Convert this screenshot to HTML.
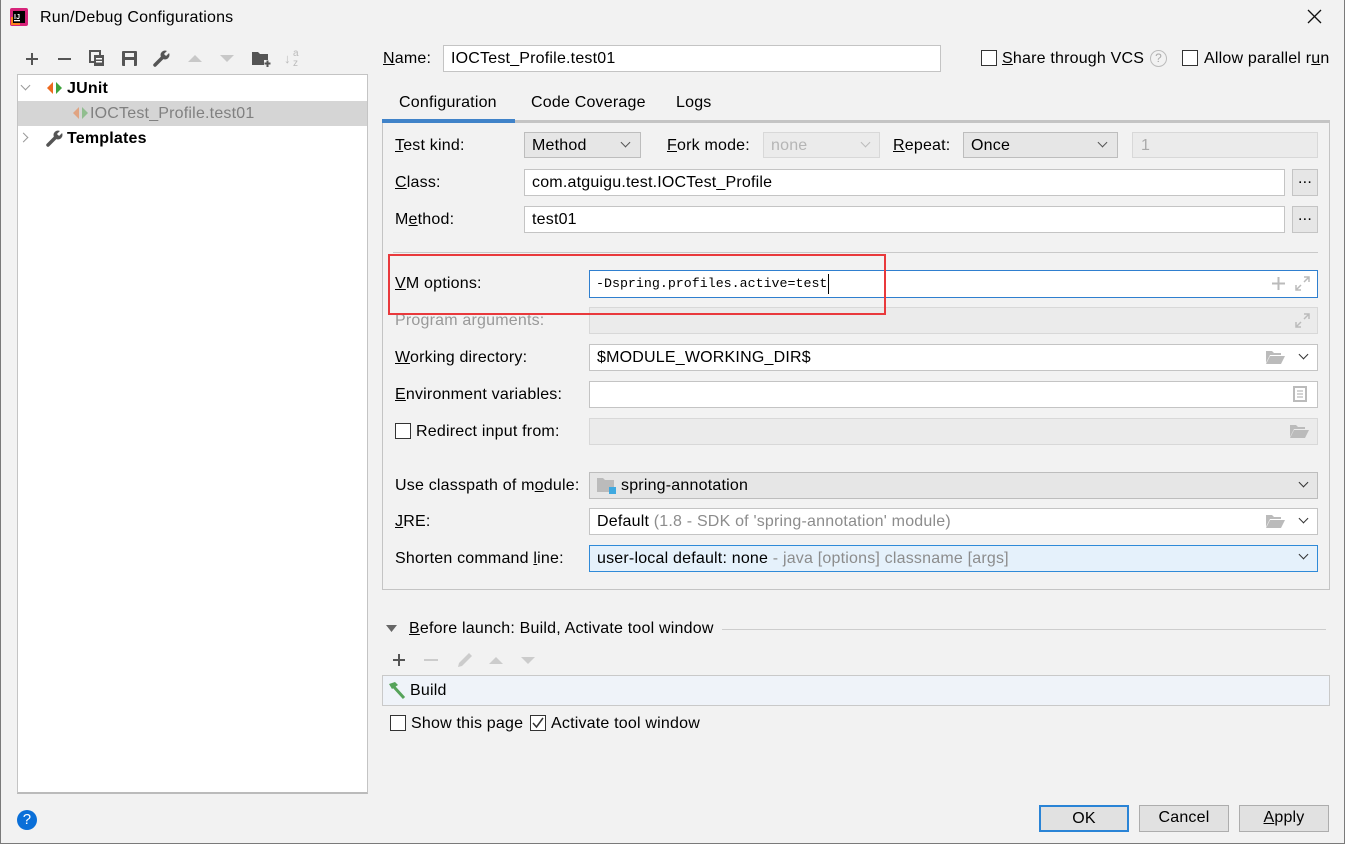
<!DOCTYPE html><html><head><meta charset="utf-8"><style>
*{box-sizing:border-box;margin:0;padding:0}
body{width:1345px;height:844px;background:#f2f2f2;font-family:"Liberation Sans",sans-serif;font-size:16px;letter-spacing:.2px;color:#000;position:relative;overflow:hidden}
.a{position:absolute;white-space:nowrap}
.t{position:absolute;white-space:nowrap;line-height:18px}
.in{position:absolute;background:#fff;border:1px solid #c4c4c4}
.dis{position:absolute;background:#ebebeb;border:1px solid #d8d8d8}
.cb{position:absolute;background:#e6e6e6;border:1px solid #bdbdbd}
.chk{position:absolute;width:16px;height:16px;border:1px solid #333;background:#fff}
.btn{position:absolute;background:#e1e1e1;border:1px solid #adadad;text-align:center;line-height:24px}
.g{color:#8c8c8c}
.dd{position:absolute;width:7px;height:7px;border-right:1.3px solid #555;border-bottom:1.3px solid #555;transform:rotate(45deg)}
u{text-decoration:underline}
</style></head><body>
<div class="a" style="left:0;top:0;width:1px;height:844px;background:#7a7a7a"></div>
<div class="a" style="right:0;top:0;width:1px;height:844px;background:#7a7a7a"></div>
<div class="a" style="left:0;bottom:0;width:1345px;height:1px;background:#7a7a7a"></div>
<svg class="a" style="left:10px;top:8px" width="18" height="18"><rect x="0" y="0" width="18" height="18" rx="2" fill="#d6247a"/><rect x="1" y="9" width="9" height="8" fill="#fc801d"/><rect x="3" y="3" width="12" height="12" fill="#000"/><text x="4" y="11" font-size="7" fill="#fff" font-family="Liberation Sans" font-weight="bold">IJ</text><rect x="4" y="12" width="6" height="1.3" fill="#fff"/></svg>
<div class="t" style="left:40px;top:9px">Run/Debug Configurations</div>
<svg class="a" style="left:1307px;top:9px" width="15" height="15"><path d="M1 1 L14 14 M14 1 L1 14" stroke="#111" stroke-width="1.3"/></svg>

<!-- toolbar -->
<svg class="a" style="left:25px;top:52px" width="14" height="14"><path d="M7 1V13M1 7H13" stroke="#555" stroke-width="2"/></svg>
<div class="a" style="left:58px;top:58px;width:13px;height:2px;background:#555"></div>
<svg class="a" style="left:89px;top:50px" width="16" height="16"><rect x="1" y="1" width="10" height="11" fill="none" stroke="#555" stroke-width="2"/><rect x="5" y="5" width="10" height="11" fill="#555"/><rect x="7" y="8" width="6" height="1.5" fill="#fff"/><rect x="7" y="11" width="6" height="1.5" fill="#fff"/></svg>
<svg class="a" style="left:122px;top:51px" width="16" height="16"><rect x="0" y="0" width="15" height="15" rx="1" fill="#555"/><rect x="3" y="2" width="9" height="4" fill="#f2f2f2"/><rect x="3" y="9" width="9" height="6" fill="#f2f2f2"/></svg>
<svg class="a" style="left:153px;top:50px" width="17" height="17"><path d="M2 15 L9 8" stroke="#555" stroke-width="3.5" stroke-linecap="round"/><circle cx="12" cy="5" r="4.5" fill="#555"/><path d="M12 5 L16 1" stroke="#f2f2f2" stroke-width="3"/></svg>
<svg class="a" style="left:187px;top:53px" width="16" height="10"><path d="M1 9 L8 2 L15 9Z" fill="#c8c8c8"/></svg>
<svg class="a" style="left:219px;top:54px" width="16" height="10"><path d="M1 1 L8 8 L15 1Z" fill="#c8c8c8"/></svg>
<svg class="a" style="left:252px;top:50px" width="19" height="18"><path d="M0 2 H6 L8 4 H16 V15 H0Z" fill="#555"/><rect x="12" y="10" width="7" height="7" fill="#f2f2f2"/><path d="M15.5 10.5 V17 M12.5 13.5 H18.5" stroke="#555" stroke-width="2"/></svg>
<div class="t" style="left:284px;top:50px;font-size:13px;color:#bbb">↓</div>
<div class="t" style="left:293px;top:45px;font-size:10px;color:#bbb">a</div>
<div class="t" style="left:293px;top:55px;font-size:10px;color:#bbb">z</div>

<!-- tree -->
<div class="a" style="left:17px;top:74px;width:351px;height:720px;background:#fff;border:1px solid #c4c4c4;border-bottom:2px solid #bbb"></div>
<div class="a" style="left:18px;top:101px;width:349px;height:25px;background:#d5d5d5"></div>
<div class="dd" style="left:22px;top:82px;border-color:#999"></div>
<svg class="a" style="left:47px;top:82px" width="16" height="12"><path d="M6 0 L0 6 L6 12Z" fill="#ee6a1f"/><path d="M9 0 L15 6 L9 12Z" fill="#3fa33c"/></svg>
<div class="t" style="left:67px;top:80px;font-weight:bold">JUnit</div>
<svg class="a" style="left:73px;top:107px" width="16" height="12" opacity=".45"><path d="M6 0 L0 6 L6 12Z" fill="#ee6a1f"/><path d="M9 0 L15 6 L9 12Z" fill="#3fa33c"/></svg>
<div class="t" style="left:90px;top:105px;color:#808080">IOCTest_Profile.test01</div>
<div class="a" style="left:20px;top:134px;width:7px;height:7px;border-right:1.3px solid #999;border-top:1.3px solid #999;transform:rotate(45deg)"></div>
<svg class="a" style="left:46px;top:130px" width="17" height="17"><path d="M2 15 L9 8" stroke="#555" stroke-width="3.5" stroke-linecap="round"/><circle cx="12" cy="5" r="4.5" fill="#555"/><path d="M12 5 L16 1" stroke="#fff" stroke-width="3"/></svg>
<div class="t" style="left:67px;top:130px;font-weight:bold">Templates</div>

<!-- name -->
<div class="t" style="left:383px;top:50px"><u>N</u>ame:</div>
<div class="in" style="left:443px;top:45px;width:498px;height:27px"></div>
<div class="t" style="left:451px;top:50px">IOCTest_Profile.test01</div>
<div class="chk" style="left:981px;top:50px"></div>
<div class="t" style="left:1002px;top:50px"><u>S</u>hare through VCS</div>
<div class="a" style="left:1150px;top:50px;width:17px;height:17px;border:1px solid #bbb;border-radius:50%;color:#aaa;font-size:12px;text-align:center;line-height:15px">?</div>
<div class="chk" style="left:1182px;top:50px"></div>
<div class="t" style="left:1204px;top:50px">Allow parallel r<u>u</u>n</div>

<!-- tabs -->
<div class="t" style="left:399px;top:94px">Configuration</div>
<div class="t" style="left:531px;top:94px">Code Coverage</div>
<div class="t" style="left:676px;top:94px">Logs</div>
<div class="a" style="left:382px;top:122px;width:948px;height:468px;border:1px solid #c4c4c4;border-top:none"></div>
<div class="a" style="left:382px;top:120px;width:948px;height:3px;background:#c4c4c4"></div>
<div class="a" style="left:382px;top:119px;width:133px;height:4px;background:#4083c9"></div>

<!-- rows -->
<div class="t" style="left:395px;top:137px"><u>T</u>est kind:</div>
<div class="cb" style="left:524px;top:132px;width:117px;height:26px"></div>
<div class="t" style="left:532px;top:137px">Method</div>
<div class="dd" style="left:622px;top:139px"></div>
<div class="t" style="left:667px;top:137px"><u>F</u>ork mode:</div>
<div class="dis" style="left:763px;top:132px;width:117px;height:26px"></div>
<div class="t g" style="left:771px;top:137px;color:#b5b5b5">none</div>
<div class="dd" style="left:862px;top:139px;border-color:#bbb"></div>
<div class="t" style="left:893px;top:137px"><u>R</u>epeat:</div>
<div class="cb" style="left:963px;top:132px;width:155px;height:26px"></div>
<div class="t" style="left:971px;top:137px">Once</div>
<div class="dd" style="left:1099px;top:139px"></div>
<div class="dis" style="left:1132px;top:132px;width:186px;height:26px"></div>
<div class="t" style="left:1141px;top:137px;color:#aaa">1</div>

<div class="t" style="left:395px;top:174px"><u>C</u>lass:</div>
<div class="in" style="left:524px;top:169px;width:761px;height:27px"></div>
<div class="t" style="left:532px;top:174px">com.atguigu.test.IOCTest_Profile</div>
<div class="btn" style="left:1292px;top:169px;width:26px;height:27px;line-height:18px;background:#e6e6e6;border-color:#c4c4c4">...</div>
<div class="t" style="left:395px;top:211px">M<u>e</u>thod:</div>
<div class="in" style="left:524px;top:206px;width:761px;height:27px"></div>
<div class="t" style="left:532px;top:211px">test01</div>
<div class="btn" style="left:1292px;top:206px;width:26px;height:27px;line-height:18px;background:#e6e6e6;border-color:#c4c4c4">...</div>
<div class="a" style="left:393px;top:252px;width:925px;height:1px;background:#c9c9c9"></div>

<div class="t" style="left:395px;top:275px"><u>V</u>M options:</div>
<div class="in" style="left:589px;top:270px;width:729px;height:28px;border-color:#2f7fcf"></div>
<div class="t" style="left:596px;top:275px;font-family:'Liberation Mono',monospace;font-size:13.3px;letter-spacing:0">-Dspring.profiles.active=test</div>
<div class="a" style="left:828px;top:274px;width:1px;height:20px;background:#000"></div>
<svg class="a" style="left:1272px;top:277px" width="13" height="13"><path d="M6.5 0V13M0 6.5H13" stroke="#bbb" stroke-width="2"/></svg>
<svg class="a" style="left:1295px;top:276px" width="15" height="15"><path d="M9 1H14V6M14 1L9 6M6 14H1V9M1 14L6 9" stroke="#bbb" stroke-width="1.5" fill="none"/></svg>

<div class="t" style="left:395px;top:312px;color:#999">Program arguments:</div>
<div class="dis" style="left:589px;top:307px;width:729px;height:27px"></div>
<svg class="a" style="left:1295px;top:313px" width="15" height="15"><path d="M9 1H14V6M14 1L9 6M6 14H1V9M1 14L6 9" stroke="#bbb" stroke-width="1.5" fill="none"/></svg>
<div class="t" style="left:395px;top:349px"><u>W</u>orking directory:</div>
<div class="in" style="left:589px;top:344px;width:729px;height:27px"></div>
<div class="t" style="left:597px;top:349px">$MODULE_WORKING_DIR$</div>
<svg class="a" style="left:1266px;top:350px" width="19" height="14"><path d="M0 1 H6 L8 3 H15 V5 H4 L0 13Z" fill="#bbb"/><path d="M4 6 H19 L15 14 H0Z" fill="#bbb"/></svg>
<div class="dd" style="left:1300px;top:351px;border-color:#333"></div>
<div class="t" style="left:395px;top:386px"><u>E</u>nvironment variables:</div>
<div class="in" style="left:589px;top:381px;width:729px;height:27px"></div>
<svg class="a" style="left:1293px;top:386px" width="14" height="16"><rect x="1" y="1" width="12" height="14" fill="none" stroke="#bbb" stroke-width="2"/><path d="M4 5H10M4 8H10M4 11H10" stroke="#bbb" stroke-width="1.3"/></svg>
<div class="chk" style="left:395px;top:423px"></div>
<div class="t" style="left:416px;top:423px">Redirect input from:</div>
<div class="dis" style="left:589px;top:418px;width:729px;height:27px"></div>
<svg class="a" style="left:1290px;top:424px" width="19" height="14"><path d="M0 1 H6 L8 3 H15 V5 H4 L0 13Z" fill="#bbb"/><path d="M4 6 H19 L15 14 H0Z" fill="#bbb"/></svg>

<div class="t" style="left:395px;top:477px">Use classpath of m<u>o</u>dule:</div>
<div class="cb" style="left:589px;top:472px;width:729px;height:27px"></div>
<svg class="a" style="left:597px;top:477px" width="20" height="18"><path d="M0 1 H6 L8 3 H17 V15 H0Z" fill="#bbb"/><rect x="12" y="10" width="7" height="7" fill="#3fa9e0"/></svg>
<div class="t" style="left:621px;top:477px">spring-annotation</div>
<div class="dd" style="left:1300px;top:479px;border-color:#333"></div>
<div class="t" style="left:395px;top:513px"><u>J</u>RE:</div>
<div class="in" style="left:589px;top:508px;width:729px;height:27px"></div>
<div class="t" style="left:597px;top:513px">Default <span class="g">(1.8 - SDK of 'spring-annotation' module)</span></div>
<svg class="a" style="left:1266px;top:514px" width="19" height="14"><path d="M0 1 H6 L8 3 H15 V5 H4 L0 13Z" fill="#bbb"/><path d="M4 6 H19 L15 14 H0Z" fill="#bbb"/></svg>
<div class="dd" style="left:1300px;top:515px;border-color:#333"></div>
<div class="t" style="left:395px;top:550px">Shorten command <u>l</u>ine:</div>
<div class="a" style="left:589px;top:545px;width:729px;height:27px;background:#e5f1fb;border:1px solid #2f8ad8"></div>
<div class="t" style="left:597px;top:550px">user-local default: none <span class="g">- java [options] classname [args]</span></div>
<div class="dd" style="left:1300px;top:551px;border-color:#333"></div>

<div class="a" style="left:388px;top:254px;width:498px;height:61px;border:2px solid #e9393c;z-index:5"></div>

<!-- before launch -->
<svg class="a" style="left:386px;top:625px" width="12" height="8"><path d="M0 0 H11 L5.5 7Z" fill="#666"/></svg>
<div class="t" style="left:409px;top:620px"><u>B</u>efore launch: Build, Activate tool window</div>
<div class="a" style="left:722px;top:629px;width:604px;height:1px;background:#cdcdcd"></div>
<svg class="a" style="left:392px;top:653px" width="14" height="14"><path d="M7 1V13M1 7H13" stroke="#555" stroke-width="2"/></svg>
<div class="a" style="left:424px;top:659px;width:14px;height:2px;background:#ccc"></div>
<svg class="a" style="left:456px;top:651px" width="18" height="18"><path d="M2 16 L3 12 L13 2 L16 5 L6 15Z" fill="#ccc"/></svg>
<svg class="a" style="left:488px;top:655px" width="16" height="10"><path d="M1 9 L8 2 L15 9Z" fill="#ccc"/></svg>
<svg class="a" style="left:520px;top:656px" width="16" height="10"><path d="M1 1 L8 8 L15 1Z" fill="#ccc"/></svg>
<div class="a" style="left:382px;top:675px;width:948px;height:31px;background:#eff3f9;border:1px solid #c9c9c9"></div>
<svg class="a" style="left:386px;top:680px" width="20" height="20"><path d="M3 4 L9 2 L12 5 L6 9Z" fill="#56a35a"/><path d="M8 7 L18 18" stroke="#56a35a" stroke-width="3"/></svg>
<div class="t" style="left:410px;top:682px">Build</div>
<div class="chk" style="left:390px;top:715px"></div>
<div class="t" style="left:411px;top:715px">Show this page</div>
<div class="chk" style="left:530px;top:715px"></div>
<svg class="a" style="left:531px;top:716px" width="14" height="14"><path d="M2 7 L5.5 11 L12 2" fill="none" stroke="#333" stroke-width="1.5"/></svg>
<div class="t" style="left:551px;top:715px">Activate tool window</div>

<!-- bottom -->
<div class="a" style="left:17px;top:810px;width:20px;height:20px;border-radius:50%;background:#0a6fd8;color:#fff;text-align:center;font-size:15px;line-height:20px">?</div>
<div class="btn" style="left:1039px;top:805px;width:90px;height:27px;border:2px solid #2a84d6;background:#e1e1e1">OK</div>
<div class="btn" style="left:1139px;top:805px;width:90px;height:27px">Cancel</div>
<div class="btn" style="left:1239px;top:805px;width:90px;height:27px"><u>A</u>pply</div>
</body></html>
